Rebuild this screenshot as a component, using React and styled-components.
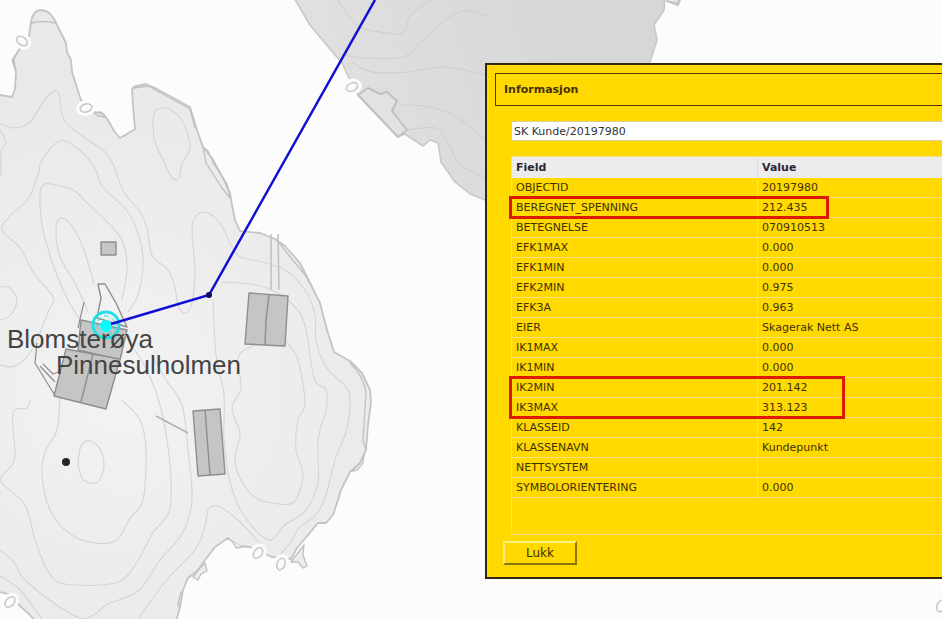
import { useState } from 'react'
import styled, { createGlobalStyle } from 'styled-components'

const fields = [
    ['OBJECTID', '20197980'],
    ['BEREGNET_SPENNING', '212.435'],
    ['BETEGNELSE', '070910513'],
    ['EFK1MAX', '0.000'],
    ['EFK1MIN', '0.000'],
    ['EFK2MIN', '0.975'],
    ['EFK3A', '0.963'],
    ['EIER', 'Skagerak Nett AS'],
    ['IK1MAX', '0.000'],
    ['IK1MIN', '0.000'],
    ['IK2MIN', '201.142'],
    ['IK3MAX', '313.123'],
    ['KLASSEID', '142'],
    ['KLASSENAVN', 'Kundepunkt'],
    ['NETTSYSTEM', ''],
    ['SYMBOLORIENTERING', '0.000'],
]

const islandCoast = 'M-4 95 L0 95 L12 97 L15 89 L16 72 L13 60 L20 48 L29 36 L31 22 Q33 11 40 10 Q49 10 54 19 L62 35 L66 43 L67 52 L71 60 L72 72 L77 88 L81 100 L95 112 L103 114 L108 120 L114 131 L120 138 L127 134 L135 129 L133 106 L132 90 Q133 86 137 86 L146 84 L155 88 L190 107 L197 130 L203 147 L212 158 L224 180 L230 193 L232 205 L235 220 L240 231 L260 233 L275 239 L285 246 L300 263 L310 283 L320 303 L327 330 L334 352 L350 361 L362 373 L370 390 L371 402 L368 425 L366 450 L360 463 L350 472 L341 490 L338 500 L333 515 L326 523 L318 523 L308 535 L297 548 L291 559 L272 557 L250 547 L240 546 L233 542 L228 538 L215 547 L205 560 L198 570 L188 578 L183 590 L180 607 L176 622 L36 622 L30 615 L19 605 L8 594 L0 592 L-4 592 Z'

const mainlandCoast = 'M293 -4 L310 25 L335 55 L342 63 L350 80 L358 95 L398 137 L405 134 L423 146 L430 140 L438 143 L441 162 L455 182 L470 194 L485 200 L560 190 L650 62 L657 40 L654 25 L664 10 L665 -4 Z'

const islandContours = [
    [[0, 124], [15, 128], [30, 122], [46, 98], [58, 92], [64, 120], [85, 138], [108, 155], [118, 178], [125, 194], [140, 212], [147, 228], [152, 255], [168, 270], [175, 287], [178, 305], [185, 313], [192, 303], [195, 270], [192, 228], [198, 214], [208, 213], [220, 223], [232, 247], [240, 257], [258, 261], [285, 270], [305, 290], [315, 315], [316, 340], [326, 367], [345, 386], [350, 400], [346, 432], [335, 460], [325, 498], [315, 516], [300, 527], [290, 543], [280, 555]],
    [[0, 365], [15, 366], [32, 350], [48, 312], [53, 297], [35, 275], [20, 248], [2, 230], [10, 216], [28, 199], [38, 175], [42, 160], [60, 141], [78, 149], [95, 168], [102, 186], [128, 212], [140, 240], [143, 265], [138, 295], [128, 312]],
    [[80, 320], [68, 300], [55, 270], [43, 230], [40, 195], [45, 184], [60, 186], [75, 191], [85, 201], [105, 220], [122, 240], [127, 268], [122, 300]],
    [[155, 110], [165, 108], [180, 117], [187, 132], [190, 148], [182, 164], [179, 178], [172, 178], [164, 162], [155, 142], [153, 122], [155, 110]],
    [[88, 312], [75, 283], [60, 257], [56, 228], [61, 218], [72, 226], [84, 250], [94, 284]],
    [[0, 287], [10, 288], [17, 301], [10, 316], [0, 320]],
    [[60, 398], [57, 430], [45, 452], [42, 475], [50, 510], [70, 534], [95, 543], [117, 540], [130, 518], [143, 500], [146, 450], [140, 420], [122, 400]],
    [[30, 400], [27, 408], [13, 413], [15, 452], [12, 465], [1, 481], [25, 505], [35, 540], [48, 571], [65, 584], [115, 583], [135, 565], [153, 533], [169, 512], [171, 480], [167, 440], [160, 405], [148, 372], [135, 350]],
    [[0, 550], [14, 562], [24, 579], [55, 604], [80, 618], [92, 616], [108, 604], [138, 591], [160, 560], [182, 534], [192, 500], [188, 450], [182, 405], [166, 380], [152, 355]],
    [[0, 576], [20, 590], [42, 619]],
    [[138, 619], [165, 582], [195, 550], [205, 526], [209, 508], [220, 507], [238, 520], [256, 539], [264, 548]],
    [[78, 464], [81, 446], [90, 441], [100, 449], [104, 466], [99, 481], [90, 483], [82, 478], [78, 464]],
    [[270, 340], [250, 347], [238, 358], [241, 388], [232, 408], [240, 434], [235, 456], [239, 476], [253, 496], [272, 503], [294, 502], [303, 475], [296, 450], [298, 420], [305, 403], [298, 360], [287, 342]],
    [[222, 282], [250, 284], [272, 290], [292, 304], [305, 325], [314, 378], [326, 390], [326, 410], [318, 440], [318, 482], [306, 510], [285, 525], [268, 540], [243, 514], [230, 482], [224, 440], [224, 395], [216, 355], [213, 300]],
    [[0, 130], [6, 142], [1, 152], [1, 175]],
]

const mainlandContours = [
    [[338, 0], [352, 20], [365, 29], [398, 34], [406, 28], [410, 16], [430, 0]],
    [[345, 55], [365, 58], [403, 57], [420, 43], [458, 12], [486, 16]],
    [[352, 62], [372, 72], [408, 72], [445, 67], [486, 75]],
    [[402, 105], [430, 107], [458, 118], [486, 141]],
    [[408, 130], [435, 128], [448, 142], [460, 164], [486, 178]],
]

// Catmull-Rom spline through the points
const smooth = (pts) => {
    let d = `M${pts[0].join(' ')}`
    for (let i = 0; i < pts.length - 1; i++) {
        const a = pts[i - 1] || pts[i]
        const b = pts[i]
        const c = pts[i + 1]
        const e = pts[i + 2] || c
        d += ` C${b[0] + (c[0] - a[0]) / 6} ${b[1] + (c[1] - a[1]) / 6} ${c[0] - (e[0] - b[0]) / 6} ${c[1] - (e[1] - b[1]) / 6} ${c[0]} ${c[1]}`
    }
    return d
}

// Zero-level marks that break the shore line
const depthMarks = [
    [22, 41, -55],
    [86, 108, 75],
    [352, 87, 65],
    [258, 553, 35],
    [281, 564, 20],
    [10, 602, 45],
    [941, 606, 20],
]

const Map = () => (
    <MapCanvas role="img" aria-label="Kart">
        <defs>
            <radialGradient id="island" gradientUnits="userSpaceOnUse" cx="120" cy="390" r="320">
                <stop offset="0" stopColor="#f3f3f3" />
                <stop offset="0.5" stopColor="#ededed" />
                <stop offset="1" stopColor="#e9e9e9" />
            </radialGradient>
            <linearGradient id="mainland" gradientUnits="userSpaceOnUse" x1="300" y1="80" x2="560" y2="20">
                <stop offset="0" stopColor="#e1e1e1" />
                <stop offset="1" stopColor="#d7d7d7" />
            </linearGradient>
        </defs>

        <g strokeLinejoin="round" strokeLinecap="round" fill="none">
            <path d={islandCoast} fill="url(#island)" stroke="#c4c4c4" strokeWidth="1.8" />
            <path d={mainlandCoast} fill="url(#mainland)" stroke="#c8c8c8" strokeWidth="1.6" />
            <path d="M667 1 L678 5 L680 0" stroke="#c0c0c0" strokeWidth="2" fill="#d7d7d7" />

            <g stroke="#d4d4d4" strokeWidth="1.1">
                {islandContours.map((pts, i) => <path key={i} d={smooth(pts)} />)}
            </g>
            <g stroke="#cdcdcd" strokeWidth="1">
                {mainlandContours.map((pts, i) => <path key={i} d={smooth(pts)} />)}
            </g>

            <g stroke="#c0c0c0" strokeWidth="1.3">
                <path d="M31 23 Q42 20 55 23" />
                <path d="M14 60 L15 70 M19 50 L12 60 L14 66" />
                <path d="M94 113 L98 116 L106 117 L101 112 Z" />
                <path d="M134 88 L148 86 L190 109 L195 128" />
                <path d="M203 147 L208 151 L214 164 L227 184 L230 198 L222 188 L206 163 Z" />
                <path d="M277 240 L291 258 L306 276 L309 282" />
                <path d="M350 363 Q363 375 366 392 L363 440 L366 450" />
                <path d="M364 454 L361 462 L352 471 L357 470 L363 463 Z" />
                <path d="M304 545 L303 555 L307 566 L303 568 L298 562 L291 562 Z" fill="#ededed" />
                <path d="M233 542 L236 548 L243 547" fill="#ededed" />
                <path d="M205 563 L207 571 L201 574 L198 580 L193 577 L200 568 Z" fill="#ededed" />
                <path d="M181 592 L178 605 L180 608" />
                <path d="M358 95 L368 88 L380 94 L387 92 L397 101 L392 111 L407 130 L398 137 Z" strokeWidth="2" fill="#e2e2e2" />
            </g>

            {depthMarks.map(([x, y, turn]) => (
                <g key={`${x}-${y}`} transform={`translate(${x} ${y}) rotate(${turn})`}>
                    <ellipse rx="8" ry="10" fill="#fcfcfc" />
                    <ellipse rx="4" ry="6" stroke="#cacaca" strokeWidth="1.6" />
                </g>
            ))}
        </g>

        <g stroke="#b3b3b3" strokeWidth="1.6" fill="none">
            <path d="M271 234 V290 M278 234 L279 290" stroke="#c2c2c2" />
            <path d="M156 416 L188 433" />
        </g>

        <g stroke="#8e8e8e" strokeWidth="1.4" fill="#c5c5c5" strokeLinejoin="round">
            <path d="M101 242 H116 V255 H101 Z" />
            <path d="M249 293 L288 296 L285 346 L245 344 Z" />
            <path d="M269 295 L266 320 L265 345" fill="none" />
            <path d="M193 411 L220 409 L225 474 L198 476 Z" />
            <path d="M205 410 L210 475" fill="none" />
            <path d="M98 284 L105 284 L116 303 L127 327 L97 318 L101 298 Z" fill="#f2f2f2" />
            <path d="M81 320 L127 330 L120 360 L78 350 Z" />
            <path d="M66 349 L120 359 L106 409 L54 396 Z" />
            <path d="M93 354 L81 402" fill="none" />
            <path d="M84 302 L78 328 M37 343 L35 363 L54 394 M40 366 L55 382 M43 364 L53 374 L58 372" fill="none" strokeWidth="1.2" />
        </g>

        <circle cx="66" cy="462" r="4" fill="#262626" />

        <g fill="none" stroke="#1ee0e8" strokeWidth="3">
            <circle cx="106" cy="325" r="13" />
            <circle cx="106" cy="325" r="9" strokeWidth="1" strokeDasharray="5 3" />
            <circle cx="106" cy="326" r="5" fill="#00ffff" stroke="#00ffff" strokeWidth="2" />
        </g>
        <path d="M375 0 L209 295 L111 324" fill="none" stroke="#1010d4" strokeWidth="2.5" />
        <circle cx="209" cy="295" r="3" fill="#0c0c60" />

        <PlaceName x="7" y="348">Blomsterøya</PlaceName>
        <PlaceName x="56" y="374">Pinnesulholmen</PlaceName>
    </MapCanvas>
)

const App = () => {
    const [open, setOpen] = useState(true)

    return (
        <Page>
            <GlobalStyle />
            <Map />

            {open && (
                <Dialog role="dialog" aria-labelledby="dialog-title">
                    <TitleBar id="dialog-title">Informasjon</TitleBar>

                    <Body>
                        <ObjectInput type="text" aria-label="Objekt" defaultValue="SK Kunde/20197980" />

                        <TableFrame>
                            <Table>
                                <thead>
                                    <tr>
                                        <HeadCell>Field</HeadCell>
                                        <HeadCell>Value</HeadCell>
                                    </tr>
                                </thead>
                                <tbody>
                                    {fields.map(([name, value]) => (
                                        <tr key={name}>
                                            <Cell>{name}</Cell>
                                            <Cell>{value}</Cell>
                                        </tr>
                                    ))}
                                </tbody>
                            </Table>
                            <Highlight $row={1} $rows={1} $width={320} />
                            <Highlight $row={10} $rows={2} $width={336} />
                        </TableFrame>
                    </Body>

                    <CloseButton type="button" onClick={() => setOpen(false)}>Lukk</CloseButton>
                </Dialog>
            )}
        </Page>
    )
}

export default App

const GlobalStyle = createGlobalStyle`
    * {
        box-sizing: border-box;
    }

    body {
        margin: 0;
        background: #fcfcfc;
    }
`

const Page = styled.main`
    position: relative;
    min-height: 100vh;
    overflow: hidden;
    font-family: Verdana, "DejaVu Sans", sans-serif;
    font-size: 11px;
    color: #403004;
`

const MapCanvas = styled.svg`
    display: block;
    width: 100%;
    height: 100vh;
`

const PlaceName = styled.text`
    font-family: "Liberation Sans", Arial, sans-serif;
    font-size: 26px;
    fill: #444;
`

// Wider than the room beside the map, so it runs out past the right edge
const Dialog = styled.section`
    position: absolute;
    top: 63px;
    left: 485px;
    right: -48px;
    padding: 8px 8px 12px;
    background: #ffd900;
    border: 2px solid #33260c;
`

const TitleBar = styled.h1`
    margin: 0;
    padding: 1px 8px 0;
    border: 1px solid #4c390a;
    font-size: 11px;
    line-height: 30px;
    font-weight: 700;
    color: #45300a;
`

const Body = styled.div`
    display: flex;
    flex-direction: column;
    gap: 15px;
    padding: 15px 16px 6px;
`

const ObjectInput = styled.input`
    width: 100%;
    height: 20px;
    padding: 0 2px;
    border: 1px solid #d8cf9a;
    border-radius: 0;
    background: #fff;
    font: inherit;
    color: #333;
    outline: none;
`

const TableFrame = styled.div`
    position: relative;
    padding-bottom: 36px;
    border: 1px solid #f2e07a;
`

const Table = styled.table`
    width: 100%;
    table-layout: fixed;
    border-collapse: separate;
    border-spacing: 0;
`

const HeadCell = styled.th`
    height: 21px;
    padding: 0 4px;
    background: #ececec;
    border-right: 1px solid #ddd;
    text-align: left;
    line-height: 20px;
    color: #2c2636;

    &:first-child {
        width: 246px;
    }
`

const Cell = styled.td`
    height: 20px;
    padding: 0 4px;
    border-right: 1px solid #f2e07a;
    border-bottom: 1px solid #f2e07a;
    line-height: 19px;
`

// Red frame round one or more table rows
const Highlight = styled.div`
    position: absolute;
    left: -3px;
    top: ${({ $row }) => 19 + $row * 20}px;
    width: ${({ $width }) => $width}px;
    height: ${({ $rows }) => 3 + $rows * 20}px;
    border: 3px solid #dc1a08;
    pointer-events: none;
`

const CloseButton = styled.button`
    display: block;
    width: 74px;
    height: 24px;
    margin-left: 8px;
    padding: 0;
    background: #ffd900;
    border: 2px solid;
    border-color: #fff27a #8a7408 #8a7408 #fff27a;
    border-radius: 0;
    font-family: Tahoma, "DejaVu Sans", sans-serif;
    font-size: 12px;
    color: #403004;
    cursor: pointer;
`
